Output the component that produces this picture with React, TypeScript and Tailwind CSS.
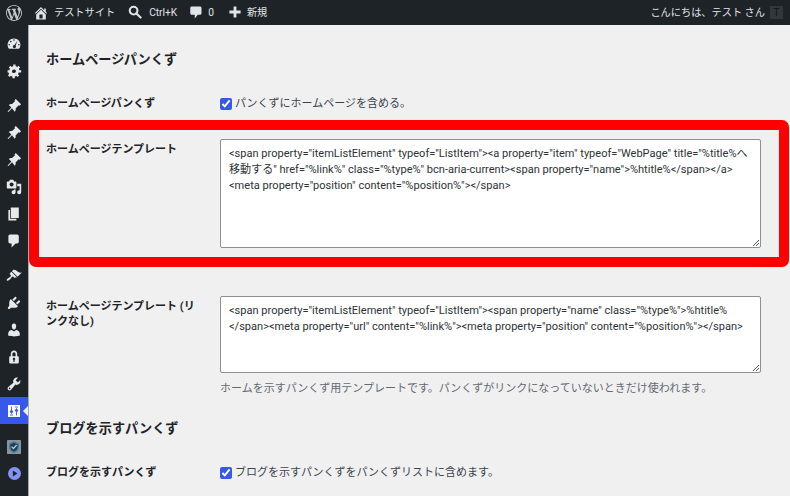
import React from "react";

const T1 = `<span property="itemListElement" typeof="ListItem"><a property="item" typeof="WebPage" title="%title%へ移動する" href="%link%" class="%type%" bcn-aria-current><span property="name">%htitle%</span></a><meta property="position" content="%position%"></span>`;
const T2 = `<span property="itemListElement" typeof="ListItem"><span property="name" class="%type%">%htitle%</span><meta property="url" content="%link%"><meta property="position" content="%position%"></span>`;

function Svg({ children, size = 16, className = "" }: { children: React.ReactNode; size?: number; className?: string }) {
  return (
    <svg viewBox="0 0 20 20" width={size} height={size} fill="currentColor" fillRule="evenodd" className={className}>
      {children}
    </svg>
  );
}

const Pin = () => (
  <Svg>
    <path d="M10.44 3.02l1.82-1.82 6.55 6.55-1.82 1.82-1.14-.38-3.9 3.9c.5 1.6.1 3-1 4.1L7.5 12.8l-4.5 4.7-1-.5 4.7-5.2-3.2-3.2c1.1-1.1 2.6-1.500 4.100-1l3.900-3.900z" />
  </Svg>
);

const menu: { icon: React.ReactNode; gap?: string; active?: boolean }[] = [
  { icon: <Svg><path d="M3.76 16h12.48c1.1-1.37 1.76-3.11 1.76-5 0-4.42-3.58-8-8-8s-8 3.58-8 8c0 1.890.66 3.630 1.760 5zM10 4c.55 0 1 .45 1 1s-.45 1-1 1-1-.45-1-1 .45-1 1-1zM6 6c.55 0 1 .45 1 1s-.45 1-1 1-1-.45-1-1 .45-1 1-1zm8.570-.73l-2.570 6.720c.3.350.490.790.490 1.280 0 1.100-.9 2-2 2s-2-.9-2-2 .9-2 2-2c.070 0 .130 0 .190.010zM4 10c.55 0 1 .45 1 1s-.45 1-1 1-1-.45-1-1 .45-1 1-1zm12 0c.55 0 1 .45 1 1s-.45 1-1 1-1-.45-1-1 .45-1 1-1z" /></Svg> },
  { icon: <Svg><path d="M18 12h-2.180c-.17.7-.44 1.350-.81 1.930l1.540 1.540-2.100 2.100-1.540-1.540c-.58.360-1.230.640-1.910.810V19H8v-2.180c-.68-.17-1.330-.45-1.910-.81l-1.540 1.540-2.120-2.120 1.540-1.540c-.360-.58-.640-1.230-.810-1.910H2V9.030h2.170c.17-.7.440-1.350.810-1.930L3.440 5.560l2.120-2.120L7.100 4.980c.58-.36 1.230-.64 1.930-.81V2H12v2.180c.68.17 1.330.45 1.910.81l1.540-1.540 2.120 2.120L16.030 7.100c.36.58.640 1.230.810 1.910H19v2.990zm-8 .5c1.380 0 2.500-1.120 2.500-2.500S11.380 8 10 8s-2.500 1.120-2.500 2.500 1.120 2 2.500 2z" /></Svg>, gap: "mb-[8px]" },
  { icon: <Pin /> },
  { icon: <Pin /> },
  { icon: <Pin /> },
  { icon: <Svg><path d="M13 11V4c0-.55-.45-1-1-1h-1.670L9 1H5L3.670 3H2c-.55 0-1 .45-1 1v7c0 .55.45 1 1 1h10c.55 0 1-.45 1-1zM7 4.500c1.380 0 2.500 1.120 2.500 2.500S8.380 9.500 7 9.500 4.500 8.380 4.500 7 5.620 4.500 7 4.500zM14 6h5v10.500c0 1.380-1.120 2.500-2.500 2.500S14 17.880 14 16.500s1.120-2.500 2.500-2.500c.17 0 .34.020.5.050V9h-3V6zm-4 8.050V13h2v3.500c0 1.380-1.120 2.500-2.500 2.500S7 17.880 7 16.500 8.120 14 9.500 14c.17 0 .34.020.5.050z" /></Svg> },
  { icon: <Svg><path d="M6 15V2h10v13H6zm-1 1h8v2H3V5h2v11z" /></Svg> },
  { icon: <Svg><path d="M5 2h9c1.100 0 2 .9 2 2v7c0 1.100-.9 2-2 2h-2l-5 5v-5H5c-1.100 0-2-.9-2-2V4c0-1.100.9-2 2-2z" /></Svg>, gap: "mb-[8px]" },
  { icon: <Svg><path d="M14.480 11.060L7.410 3.990l1.500-1.500c.5-.56 2.300-.47 3.510.32 1.210.8 1.430 1.280 2.910 2.100 1.180.64 2.450 1.260 4.450.85zm-.71.71L6.700 4.700 4.930 6.470c-.39.39-.39 1.020 0 1.410l1.060 1.060c.39.39.39 1.030 0 1.420-.6.6-1.430 1.110-2.210 1.690-.35.260-.7.530-1.010.840C1.430 13.230.4 14.950 1.200 15.750c.8.8 2.520-.22 3.890-1.570.31-.31.580-.66.840-1.010.58-.78 1.090-1.610 1.690-2.210.39-.39 1.020-.39 1.410 0l1.060 1.060c.39.39 1.020.39 1.410 0z" /></Svg> },
  { icon: <Svg><path d="M13.110 4.360L9.870 7.600 8 5.730l3.240-3.240c.35-.34 1.050-.2 1.560.32.52.51.66 1.210.31 1.550zm-8 1.770l.91-1.120 9.010 9.010-1.190.84c-.71.71-2.630 1.160-3.820 1.160H6.140L4.900 17.260c-.59.59-1.540.59-2.120 0-.59-.58-.59-1.530 0-2.120l1.240-1.240v-3.880c0-1.130.4-3.190 1.090-3.890zm7.260 3.970l3.240-3.240c.34-.35 1.040-.21 1.550.31.52.51.66 1.210.31 1.550l-3.240 3.250z" /></Svg> },
  { icon: <Svg><path d="M10 9.250c-2.270 0-2.730-3.440-2.730-3.440C7 4.020 7.820 2 9.970 2c2.160 0 2.980 2.020 2.710 3.810 0 0-.41 3.440-2.680 3.440zm0 2.570L12.720 10c2.390 0 4.520 2.330 4.520 4.530v2.490s-3.650 1.130-7.240 1.130c-3.650 0-7.240-1.130-7.240-1.130v-2.490c0-2.250 1.940-4.480 4.470-4.480z" /></Svg> },
  { icon: <Svg><path d="M14 9h1c.55 0 1 .45 1 1v7c0 .55-.45 1-1 1H5c-.55 0-1-.45-1-1v-7c0-.55.45-1 1-1h1V6c0-2.200 1.800-4 4-4s4 1.800 4 4v3zm-2 0V6c0-1.100-.9-2-2-2s-2 .9-2 2v3h4zm-1 7l-.36-2.150c.51-.24.860-.75.860-1.350 0-.83-.67-1.500-1.500-1.500s-1.500.67-1.500 1.500c0 .6.35 1.110.860 1.350L9 16h2z" /></Svg> },
  { icon: <Svg><path d="M16.680 9.770c-1.340 1.340-3.300 1.670-4.950.99l-5.410 6.520c-.99.99-2.590.99-3.580 0s-.99-2.590 0-3.570l6.520-5.420c-.68-1.650-.35-3.610.99-4.950 1.280-1.280 3.120-1.620 4.720-1.060l-2.890 2.890 2.820 2.820 2.860-2.870c.53 1.580.18 3.390-1.080 4.650zM3.810 16.210c.4.39 1.040.39 1.430 0 .4-.4.4-1.040 0-1.430-.39-.4-1.030-.4-1.430 0-.39.39-.39 1.030 0 1.430z" /></Svg> },
  {
    icon: (
      <svg viewBox="0 0 12 12" width={12} height={12}>
        <rect width="12" height="12" fill="#ffffff" />
        <path d="M3.500 1.500v5M2 6h3L3.500 8.500zM2 10h3M8.500 10.500v-5M7 6h3L8.500 3.500zM7 2h3" fill="#3858e9" stroke="#3858e9" strokeWidth="0.900" />
      </svg>
    ),
    gap: "mb-[9px]",
    active: true,
  },
  {
    icon: (
      <svg viewBox="0 0 20 20" width={14} height={14} className="mt-[1px]">
        <rect width="20" height="20" rx="1" fill="#8f9296" />
        <path d="M10 3l6 2.500v4c0 4-2.500 6.500-6 8-3.500-1.500-6-4-6-8v-4z" fill="#2a3a44" stroke="#2b80bd" strokeWidth="2" />
        <path d="M6.500 9.500l2.700 2.700 4.500-5" fill="none" stroke="#c3c9cd" strokeWidth="1.800" />
      </svg>
    ),
  },
  {
    icon: (
      <svg viewBox="0 0 20 20" width={13} height={13}>
        <circle cx="10" cy="10" r="10" fill="#8491f5" />
        <path d="M7.500 5.500l7 4.500-7 4.500z" fill="#1d2327" />
      </svg>
    ),
  },
];

function Row({ label, children, className = "" }: { label: React.ReactNode; children: React.ReactNode; className?: string }) {
  return (
    <div className={`flex ${className}`}>
      <div className="w-[174px] shrink-0 pr-[16px] font-bold text-[#1d2327] leading-[15px]">{label}</div>
      <div className="flex-1">{children}</div>
    </div>
  );
}

function Area({ value, className }: { value: string; className: string }) {
  return (
    <div className="relative w-[541px]">
      <textarea
        readOnly
        defaultValue={value}
        className={`block w-full resize-none bg-white border border-[#8c8f94] rounded-[2px] px-[8px] py-[6px] text-[11.050px] leading-[16px] text-[#2c3338] outline-none ${className}`}
      />
      <svg viewBox="0 0 6 6" width={6} height={6} className="absolute bottom-[2px] right-[2px] text-[#50575e]" fill="none" stroke="currentColor" strokeWidth="1">
        <path d="M0 6L6 0M3 6l3-3" />
      </svg>
    </div>
  );
}

export default function App() {
  return (
    <div className="relative h-[496px] w-[790px] overflow-hidden bg-[#f0f0f1] text-[11px] text-[#3c434a] font-['Roboto','Noto_Sans_CJK_JP',sans-serif]">
      <header className="flex h-[25px] items-center bg-[#1d2327] text-[10.200px] text-[#e2e4e6]">
        <div className="flex w-[27px] justify-center text-[#c3c4c7]">
          <Svg size={16}>
            <path d="M20 10c0-5.510-4.490-10-10-10C4.480 0 0 4.490 0 10c0 5.520 4.480 10 10 10 5.510 0 10-4.480 10-10zM7.780 15.370L4.370 6.220c.55-.02 1.170-.08 1.170-.08.500-.06.440-1.130-.060-1.110 0 0-1.450.110-2.370.110-.18 0-.37 0-.58-.010C4.120 2.690 6.920 1.030 10 1.030c2.300 0 4.390.870 5.970 2.300-.66-.110-1.600.380-1.600 1.540 0 .720.430 1.320.880 2.040.350.610.550 1.360.550 2.460 0 1.490-1.400 5-1.400 5l-3.030-8.370c.540-.02.820-.17.820-.17.500-.05.440-1.250-.060-1.220 0 0-1.440.120-2.380.12-.870 0-2.330-.12-2.330-.12-.500-.03-.560 1.200-.060 1.220l.920.080 1.260 3.410zM17.410 10c.240-.640.740-1.870.430-4.250.700 1.290 1.050 2.710 1.050 4.250 0 3.290-1.730 6.240-4.400 7.780.970-2.590 1.940-5.200 2.920-7.780zM6.100 18.090C3.120 16.650 1.110 13.530 1.110 10c0-1.300.230-2.480.720-3.600C3.250 10.300 4.670 14.200 6.100 18.090zm4.030-6.630l2.580 6.980c-.860.290-1.760.450-2.710.450-.790 0-1.570-.110-2.290-.330.810-2.380 1.620-4.740 2.420-7.100z" />
          </Svg>
        </div>
        <div className="ml-[6px] flex items-center">
          <Svg size={16}>
            <path d="M16 8.500l1.530 1.530-1.060 1.060L10 4.620l-6.470 6.470-1.060-1.060L10 2.500l4 4v-2h2v4zm-6-2.460l6 5.990V18H4v-5.970zM12 17v-5H8v5h4z" />
          </Svg>
          <span className="ml-[5px]">テストサイト</span>
        </div>
        <div className="ml-[13px] flex items-center">
          <svg viewBox="0 0 20 20" width={14} height={14} fill="none" stroke="currentColor" strokeWidth="3">
            <circle cx="8" cy="8" r="5.500" />
            <path d="M12 12l6 6" strokeLinecap="round" />
          </svg>
          <span className="ml-[7px]">Ctrl+K</span>
        </div>
        <div className="ml-[11px] flex items-center">
          <Svg size={15}>
            <path d="M5 2h11c1.100 0 2 .9 2 2v7c0 1.100-.9 2-2 2h-3l-4 5v-5H5c-1.100 0-2-.9-2-2V4c0-1.100.9-2 2-2z" />
          </Svg>
          <span className="ml-[5px]">0</span>
        </div>
        <div className="ml-[14px] flex items-center">
          <Svg size={14}>
            <path d="M8 2h4v6h6v4h-6v6H8v-6H2V8h6z" />
          </Svg>
          <span className="ml-[5px]">新規</span>
        </div>
        <div className="ml-auto flex items-center pr-[7px]">
          <span>こんにちは、テスト さん</span>
          <span className="ml-[5px] flex h-[13px] w-[13px] items-center justify-center bg-[#32373c] text-[10px] text-[#101417]">T</span>
        </div>
      </header>
      <div className="flex h-[471px]">
        <nav className="w-[29px] shrink-0 border-r border-[#a7aaad] bg-[#1d2327] pt-[5px] text-[#e8e9ea]">
          {menu.map((m, i) => (
            <div
              key={i}
              className={`relative flex h-[27px] w-[28px] items-center justify-center ${m.gap ?? ""} ${m.active ? "bg-[#3858e9] text-white" : ""}`}
            >
              {m.icon}
              {m.active && (
                <span className="absolute right-0 top-[9px] border-y-[5px] border-r-[5px] border-y-transparent border-r-[#f0f0f1]" />
              )}
            </div>
          ))}
        </nav>
        <main className="flex-1 pl-[17px] pt-[26px]">
          <h2 className="text-[13.200px] font-bold leading-[18px] text-[#1d2327]">ホームページパンくず</h2>
          <Row label="ホームページパンくず" className="mt-[27px]">
            <label className="flex items-center gap-[3px] text-[#3c434a]">
              <input type="checkbox" defaultChecked readOnly className="m-0 h-[12px] w-[12px] accent-[#3858e9]" />
              パンくずにホームページを含める。
            </label>
          </Row>
          <Row label={<span className="block pt-[3px]">ホームページテンプレート</span>} className="mt-[26px]">
            <Area value={T1} className="h-[109px]" />
          </Row>
          <Row label={<span className="block pt-[3px]">ホームページテンプレート (リンクなし)</span>} className="mt-[48px]">
            <Area value={T2} className="h-[77px]" />
            <p className="mt-[8px] text-[11px] leading-[16px] text-[#646970]">ホームを示すパンくず用テンプレートです。パンくずがリンクになっていないときだけ使われます。</p>
          </Row>
          <h2 className="mt-[23px] text-[13.200px] font-bold leading-[18px] text-[#1d2327]">ブログを示すパンくず</h2>
          <Row label="ブログを示すパンくず" className="mt-[27px]">
            <label className="flex items-center gap-[3px] text-[#3c434a]">
              <input type="checkbox" defaultChecked readOnly className="m-0 h-[12px] w-[12px] accent-[#3858e9]" />
              ブログを示すパンくずをパンくずリストに含めます。
            </label>
          </Row>
        </main>
      </div>
      <div className="pointer-events-none absolute left-[29px] top-[120px] h-[147px] w-[760px] rounded-[7px] border-[10px] border-[#ff0000]" />
    </div>
  );
}
